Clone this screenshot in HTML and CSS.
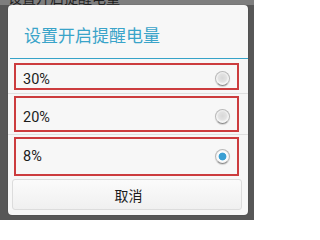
FILE: index.html
```html
<!DOCTYPE html>
<html lang="zh-CN">
<head>
<meta charset="utf-8">
<title>设置开启提醒电量</title>
<link rel="stylesheet" href="styles.css">
</head>
<body>
<div class="screen">
  <div class="strip"><span class="strip-text">设置开启提醒电量</span></div>
  <div class="dialog">
    <div class="title">设置开启提醒电量</div>
    <div class="title-line"></div>
    <div class="option opt1">
      <span class="label">30%</span>
      <span class="radio"></span>
    </div>
    <div class="divider"></div>
    <div class="option opt2">
      <span class="label">20%</span>
      <span class="radio"></span>
    </div>
    <div class="divider"></div>
    <div class="option opt3">
      <span class="label">8%</span>
      <span class="radio checked"></span>
    </div>
    <div class="cancel">取消</div>
  </div>
</div>
</body>
</html>
```

FILE: styles.css
```css
html, body {
  margin: 0;
  padding: 0;
}
body {
  font-family: Roboto, "Noto Sans", "Noto Sans CJK SC", sans-serif;
}
.screen {
  width: 254px;
  height: 220px;
  background: #575757;
  overflow: hidden;
}
.strip {
  height: 5px;
  overflow: hidden;
  background: #7e7e7e;
  display: flex;
  align-items: flex-end;
  padding-left: 8px;
}
.strip-text {
  font-family: "Noto Sans CJK SC", sans-serif;
  font-size: 14px;
  line-height: 14px;
  color: #1e1e1e;
  flex-shrink: 0;
  transform: translateY(-1px);
}
.dialog {
  margin-left: 8px;
  width: 240px;
  height: 210px;
  box-sizing: border-box;
  background: #f7f7f7;
  border-radius: 4px;
  box-shadow: 0 0 1px rgba(0,0,0,0.5);
  display: flex;
  flex-direction: column;
}
.title {
  height: 53px;
  box-sizing: border-box;
  padding-top: 6px;
  padding-left: 16px;
  display: flex;
  align-items: center;
  font-family: "Noto Sans CJK SC", sans-serif;
  font-size: 17px;
  color: #3aa4c9;
}
.title-line {
  height: 1px;
  background: #36a3c8;
  margin-left: 2px;
}
.option {
  margin-left: 6px;
  width: 225px;
  box-sizing: border-box;
  border: 2px solid #cc3c3e;
  display: flex;
  align-items: center;
  justify-content: space-between;
  padding-left: 7px;
  padding-right: 7px;
  font-size: 14.5px;
  color: #1c1c1c;
}
.opt1 {
  margin-top: 4px;
  height: 27px;
  padding-top: 3px;
}
.opt1 .label {
  padding-top: 3px;
}
.opt2 {
  margin-top: 2px;
  height: 36px;
  padding-top: 4px;
}
.opt2 .label {
  padding-top: 2px;
}
.opt3 {
  margin-top: 2px;
  height: 39px;
}
.divider {
  height: 1px;
  background: #e0e0e0;
  margin-top: 3px;
}
.opt2 + .divider {
  margin-top: 2px;
}
.radio {
  width: 15px;
  height: 15px;
  box-sizing: border-box;
  border-radius: 50%;
  border: 1px solid #b9b9b9;
  border-bottom-color: #8a8a8a;
  background: radial-gradient(circle at 50% 45%, #d8d8d8 0, #e2e2e2 4px, #f6f6f6 6px);
  box-shadow: 0 1px 1px rgba(0,0,0,0.15);
}
.radio.checked {
  background: radial-gradient(circle at 50% 50%, #3a9fd3 0, #3a9fd3 3.5px, #ffffff 4.3px, #f4f4f4 6px);
}
.cancel {
  margin-top: 3px;
  margin-left: 4px;
  width: 230px;
  height: 31px;
  box-sizing: border-box;
  border: 1px solid #dcdcdc;
  border-radius: 3px;
  background: linear-gradient(#fbfbfb, #f0f0f0);
  display: flex;
  align-items: center;
  justify-content: center;
  padding-left: 3px;
  font-family: "Noto Sans CJK SC", sans-serif;
  font-size: 14px;
  color: #1c1c1c;
}
```
